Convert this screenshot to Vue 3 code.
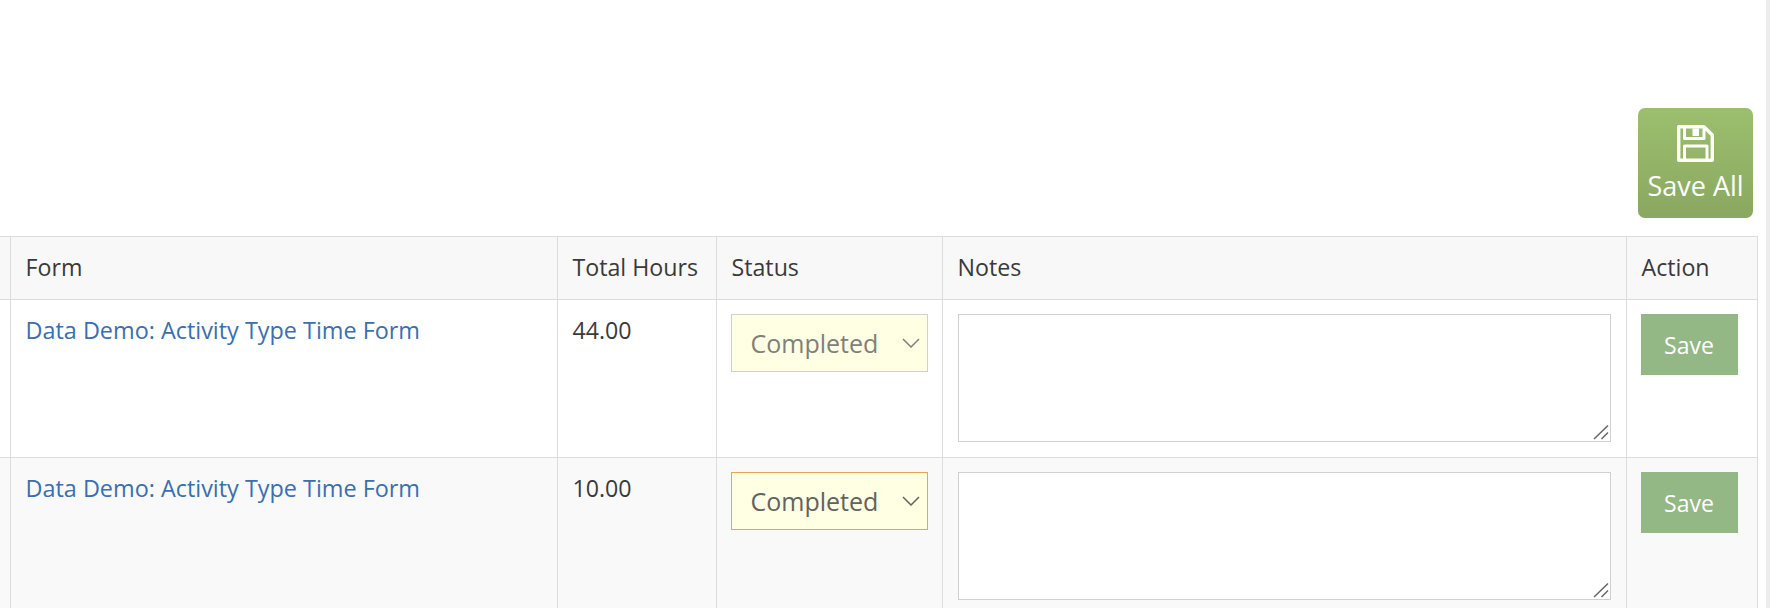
<script setup>
const rows = [
  { hours: '44.00', disabled: true },
  { hours: '10.00', disabled: false }
]
</script>

<template>
  <div class="page">
    <div class="content">
      <div class="toolbar">
        <button class="save-all" type="button">
          <svg class="disk" viewBox="0 0 37 37" width="37" height="37" fill="none" stroke="#fff" stroke-width="3.4" stroke-linejoin="round">
            <path d="M1.7 1.7H27L35.3 10V35.3H1.7Z" />
            <path d="M7.5 1.7V13.5H27V1.7" stroke-width="3" />
            <path d="M15.5 3.5H22V11H15.5Z" fill="#fff" stroke="none" />
            <path d="M7.5 35.3V21H30V35.3" stroke-width="3" />
          </svg>
          <span>Save All</span>
        </button>
      </div>
      <table class="grid">
        <colgroup>
          <col class="c0" />
          <col class="c1" />
          <col class="c2" />
          <col class="c3" />
          <col class="c4" />
          <col class="c5" />
        </colgroup>
        <thead>
          <tr>
            <th></th>
            <th>Form</th>
            <th>Total Hours</th>
            <th>Status</th>
            <th>Notes</th>
            <th>Action</th>
          </tr>
        </thead>
        <tbody>
          <tr v-for="(row, i) in rows" :key="i" :class="{ alt: i % 2 === 1 }">
            <td></td>
            <td><a class="link" href="#" @click.prevent>Data Demo: Activity Type Time Form</a></td>
            <td>{{ row.hours }}</td>
            <td>
              <div class="select-wrap" :class="{ locked: row.disabled, active: !row.disabled }">
                <span class="select-text">Completed</span>
                <svg class="chev" viewBox="0 0 18 10" width="18" height="10" fill="none" stroke="currentColor" stroke-width="1.5"><path d="M1 1L9 9L17 1" /></svg>
              </div>
            </td>
            <td>
              <div class="notes-wrap">
                <textarea class="notes"></textarea>
                <svg class="grip" viewBox="0 0 16 16" width="16" height="16" fill="none" stroke="#666" stroke-width="1.5"><path d="M1 15L15 1.5M8.5 15L15 8.5" /></svg>
              </div>
            </td>
            <td><button class="save" type="button">Save</button></td>
          </tr>
        </tbody>
      </table>
    </div>
  </div>
</template>

<style>
html, body { margin: 0; background: #fff; }
</style>

<style scoped>
.page {
  height: 608px;
  overflow: hidden;
  box-sizing: border-box;
  border-right: 4px solid #ececec;
  font-family: "Open Sans", sans-serif;
  font-size: 23.2px;
  color: #3a3a3a;
  background: #fff;
}
.content { width: 1757px; }
.toolbar {
  display: flex;
  justify-content: flex-end;
  padding: 108px 4px 18px 0;
}
.save-all {
  width: 115px;
  height: 110px;
  padding: 17px 0 0;
  border: 0;
  border-radius: 7px;
  background: linear-gradient(#9cbf6e, #8aa860);
  color: #fff;
  font-family: inherit;
  font-size: 27px;
  line-height: 34px;
  display: flex;
  flex-direction: column;
  align-items: center;
  box-sizing: border-box;
}
.disk { display: block; margin-bottom: 7px; }
.grid {
  width: 1757px;
  table-layout: fixed;
  border-collapse: collapse;
}
.c0 { width: 10px; }
.c1 { width: 547px; }
.c2 { width: 159px; }
.c3 { width: 226px; }
.c4 { width: 684px; }
.c5 { width: 131px; }
th, td {
  border: 1px solid #dcdcdc;
  padding: 14px 14px 14px 15px;
  text-align: left;
  vertical-align: top;
  font-weight: 400;
  line-height: 32px;
}
th { height: 63px; box-sizing: border-box; vertical-align: middle; background: #f8f8f8; padding-top: 12px; padding-bottom: 14px; }
tbody td { height: 158px; box-sizing: border-box; background: #fff; }
tr.alt td { background: #f9f9f9; }
th:first-child, td:first-child { border-left: 0; padding: 0; }
.link { color: #3a6fb0; text-decoration: none; font-size: 23.4px; }
.select-wrap {
  box-sizing: border-box;
  width: 197px;
  height: 58px;
  margin-left: -1px;
  background: #ffffe4;
  border: 1px solid #d0d0d0;
  display: flex;
  align-items: center;
  justify-content: space-between;
  padding: 0 7px 0 19px;
  font-size: 25px;
}
.select-wrap.locked { color: #7f8079; }
.select-wrap.active { border-color: #eda24e; color: #62625e; }
.chev { display: block; }
.notes-wrap { position: relative; width: 653px; height: 128px; }
.notes {
  display: block;
  box-sizing: border-box;
  width: 100%;
  height: 100%;
  border: 1px solid #d0d0d0;
  background: #fff;
  margin: 0;
  padding: 8px;
  outline: 0;
  resize: none;
}
.grip { position: absolute; right: 2px; bottom: 2px; pointer-events: none; }
.save {
  display: block;
  width: 97px;
  height: 61px;
  border: 0;
  margin-left: -1px;
  padding: 0;
  background: #93b886;
  color: #fff;
  font-family: inherit;
  font-size: 23px;
}
</style>
